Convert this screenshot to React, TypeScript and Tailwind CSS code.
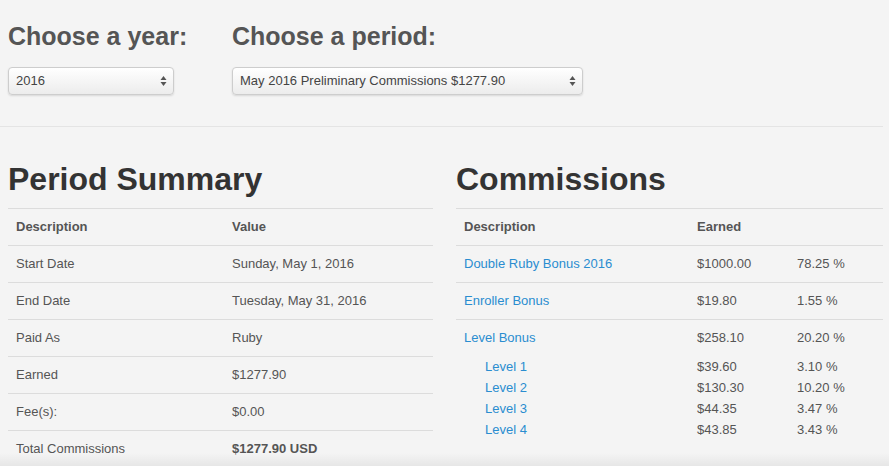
import React from 'react';

const SUMMARY = [
  { label: 'Start Date', value: 'Sunday, May 1, 2016' },
  { label: 'End Date', value: 'Tuesday, May 31, 2016' },
  { label: 'Paid As', value: 'Ruby' },
  { label: 'Earned', value: '$1277.90' },
  { label: 'Fee(s):', value: '$0.00' },
];

const BONUSES = [
  { name: 'Double Ruby Bonus 2016', earned: '$1000.00', pct: '78.25 %' },
  { name: 'Enroller Bonus', earned: '$19.80', pct: '1.55 %' },
];

const LEVELS = [
  { name: 'Level 1', earned: '$39.60', pct: '3.10 %' },
  { name: 'Level 2', earned: '$130.30', pct: '10.20 %' },
  { name: 'Level 3', earned: '$44.35', pct: '3.47 %' },
  { name: 'Level 4', earned: '$43.85', pct: '3.43 %' },
];

const SelectBox: React.FC<{ value: string; className?: string }> = ({ value, className }) => (
  <div
    className={`relative flex h-[28px] items-center rounded-[4px] border border-[#cdcdcd] bg-gradient-to-b from-white to-[#ececec] pl-[7px] text-[13px] text-[#444] shadow-[0_1px_2px_rgba(0,0,0,0.12)] ${className ?? ''}`}
  >
    {value}
    <svg className="absolute right-[6px] top-1/2 -translate-y-1/2" width="7" height="11" viewBox="0 0 7 11">
      <path d="M3.5 0.5 L6.5 4.5 L0.5 4.5 Z" fill="#555" />
      <path d="M3.5 10.5 L6.5 6.5 L0.5 6.5 Z" fill="#555" />
    </svg>
  </div>
);

export default function App() {
  return (
    <div className="relative min-h-screen overflow-hidden bg-[#f4f4f4] font-['Liberation_Sans',Arial,sans-serif] text-[13px] text-[#555]">
      {/* Choosers */}
      <div className="flex pl-[8px] pt-[21px]">
        <div className="w-[224px]">
          <h3 className="text-[25px] font-bold leading-[30px] text-[#555]">Choose a year:</h3>
          <SelectBox value="2016" className="mt-[16px] w-[166px]" />
        </div>
        <div>
          <h3 className="text-[25px] font-bold leading-[30px] text-[#555]">Choose a period:</h3>
          <SelectBox value="May 2016 Preliminary Commissions $1277.90" className="mt-[16px] w-[351px]" />
        </div>
      </div>

      <hr className="mt-[31px] mr-[6px] border-0 border-t border-[#e4e4e4]" />

      <div className="grid grid-cols-[425px_1fr] gap-[23px] pl-[8px] pr-[6px] pt-[33px]">
        {/* Period summary */}
        <div>
          <h2 className="text-[32px] font-bold leading-[38px] text-[#333]">Period Summary</h2>
          <div className="mt-[10px]">
            <div className="grid h-[37px] grid-cols-[216px_1fr] items-center border-t border-[#dcdcdc] px-[8px] font-bold">
              <span>Description</span>
              <span>Value</span>
            </div>
            {SUMMARY.map((row) => (
              <div key={row.label} className="grid h-[37px] grid-cols-[216px_1fr] items-center border-t border-[#dcdcdc] px-[8px]">
                <span>{row.label}</span>
                <span>{row.value}</span>
              </div>
            ))}
            <div className="grid h-[37px] grid-cols-[216px_1fr] items-center border-t border-[#dcdcdc] px-[8px]">
              <span>Total Commissions</span>
              <span className="font-bold">$1277.90 USD</span>
            </div>
          </div>
        </div>

        {/* Commissions */}
        <div>
          <h2 className="text-[32px] font-bold leading-[38px] text-[#333]">Commissions</h2>
          <div className="mt-[10px]">
            <div className="grid h-[37px] grid-cols-[233px_100px_1fr] items-center border-t border-[#dcdcdc] px-[8px] font-bold">
              <span>Description</span>
              <span>Earned</span>
              <span />
            </div>
            {BONUSES.map((b) => (
              <div key={b.name} className="grid h-[37px] grid-cols-[233px_100px_1fr] items-center border-t border-[#dcdcdc] px-[8px]">
                <a className="text-[#2a8dd0]">{b.name}</a>
                <span>{b.earned}</span>
                <span>{b.pct}</span>
              </div>
            ))}
            <div className="border-t border-[#dcdcdc] px-[8px]">
              <div className="grid h-[35px] grid-cols-[233px_100px_1fr] items-center">
                <a className="text-[#2a8dd0]">Level Bonus</a>
                <span>$258.10</span>
                <span>20.20 %</span>
              </div>
              <div className="mt-[1px]">
                {LEVELS.map((l) => (
                  <div key={l.name} className="grid h-[21px] grid-cols-[233px_100px_1fr] items-center">
                    <a className="pl-[21px] text-[#2a8dd0]">{l.name}</a>
                    <span>{l.earned}</span>
                    <span>{l.pct}</span>
                  </div>
                ))}
              </div>
            </div>
          </div>
        </div>
      </div>

      {/* bottom shade */}
      <div className="pointer-events-none absolute inset-x-0 bottom-0 h-[14px] bg-gradient-to-b from-transparent to-black/[0.06]" />
    </div>
  );
}
